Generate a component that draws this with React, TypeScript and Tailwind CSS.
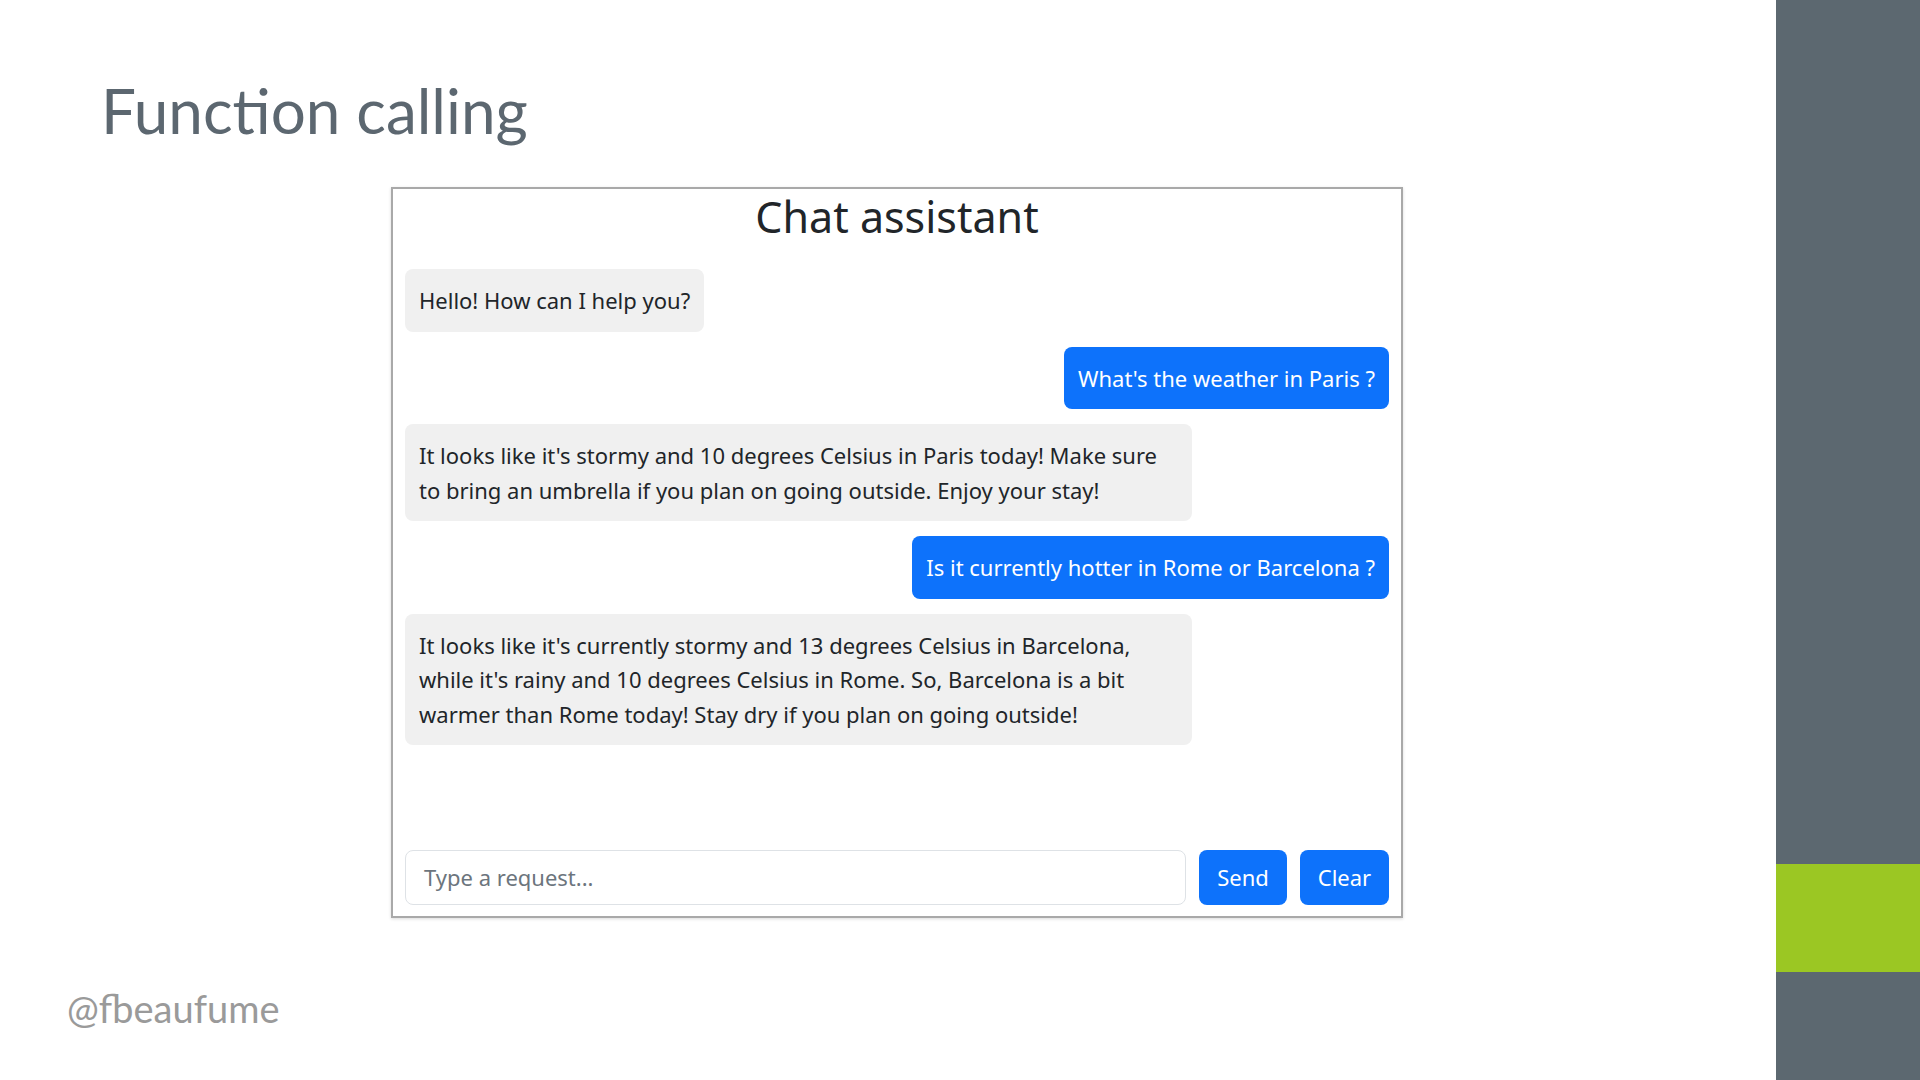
const messages = [
  { from: 'bot', lines: ['Hello! How can I help you?'] },
  { from: 'user', lines: ["What's the weather in Paris ?"] },
  {
    from: 'bot',
    lines: [
      "It looks like it's stormy and 10 degrees Celsius in Paris today! Make sure",
      'to bring an umbrella if you plan on going outside. Enjoy your stay!',
    ],
  },
  { from: 'user', lines: ['Is it currently hotter in Rome or Barcelona ?'] },
  {
    from: 'bot',
    lines: [
      "It looks like it's currently stormy and 13 degrees Celsius in Barcelona,",
      "while it's rainy and 10 degrees Celsius in Rome. So, Barcelona is a bit",
      'warmer than Rome today! Stay dry if you plan on going outside!',
    ],
  },
];

function Bubble({ from, lines }: { from: string; lines: string[] }) {
  const isUser = from === 'user';
  const wide = lines.length > 1;
  return (
    <div className={isUser ? 'flex justify-end' : 'flex justify-start'}>
      <div
        className={
          isUser
            ? 'max-w-[80%] rounded-[8px] bg-[#0d72fb] px-[14px] py-[14px] text-white'
            : wide
              ? 'w-full max-w-[80%] rounded-[8px] bg-[#f0f0f0] px-[14px] py-[14px] text-[#212529]'
              : 'max-w-[80%] rounded-[8px] bg-[#f0f0f0] px-[14px] py-[14px] text-[#212529]'
        }
      >
        {lines.map((l, i) => (
          <div key={i} className="whitespace-nowrap">
            {l}
          </div>
        ))}
      </div>
    </div>
  );
}

export default function App() {
  return (
    <div className="flex h-[1080px] w-[1920px] overflow-hidden bg-white">
      {/* Slide content */}
      <div className="flex flex-1 flex-col">
        <h1 className="pl-[101px] pt-[74px] font-['Lato',sans-serif] text-[62px] leading-[72px] text-[#5c6770]">
          Function calling
        </h1>

        <div className="pl-[391px] pt-[41px]">
          <div className="flex h-[731px] w-[1012px] flex-col border-2 border-[#a9a9a9] px-[12px] pb-[11px] font-['Noto_Sans',sans-serif] text-[22px] leading-[34.5px] shadow-[0_1px_3px_rgba(0,0,0,0.15)]">
            <h2 className="text-center text-[43px] leading-[56px] text-[#212529]">Chat assistant</h2>

            <div className="mt-[24px] flex flex-col gap-[15px]">
              {messages.map((m, i) => (
                <Bubble key={i} from={m.from} lines={m.lines} />
              ))}
            </div>

            <div className="flex-1" />

            <div className="flex items-center gap-[13px]">
              <div className="flex h-[55px] flex-1 items-center rounded-[8px] border border-[#dee2e6] px-[18px] text-[#6c757d]">
                Type a request...
              </div>
              <button className="h-[55px] w-[88px] rounded-[8px] bg-[#0d72fb] text-white">Send</button>
              <button className="h-[55px] w-[89px] rounded-[8px] bg-[#0d72fb] text-white">Clear</button>
            </div>
          </div>
        </div>

        <div className="pl-[67px] pt-[68px] font-['Lato',sans-serif] text-[38px] leading-[44px] text-[#9a9a9a]">
          @fbeaufume
        </div>
      </div>

      {/* Right accent bar */}
      <div className="flex w-[144px] flex-col bg-[#5c6870]">
        <div className="h-[864px]" />
        <div className="h-[108px] bg-[#9bc723]" />
      </div>
    </div>
  );
}
